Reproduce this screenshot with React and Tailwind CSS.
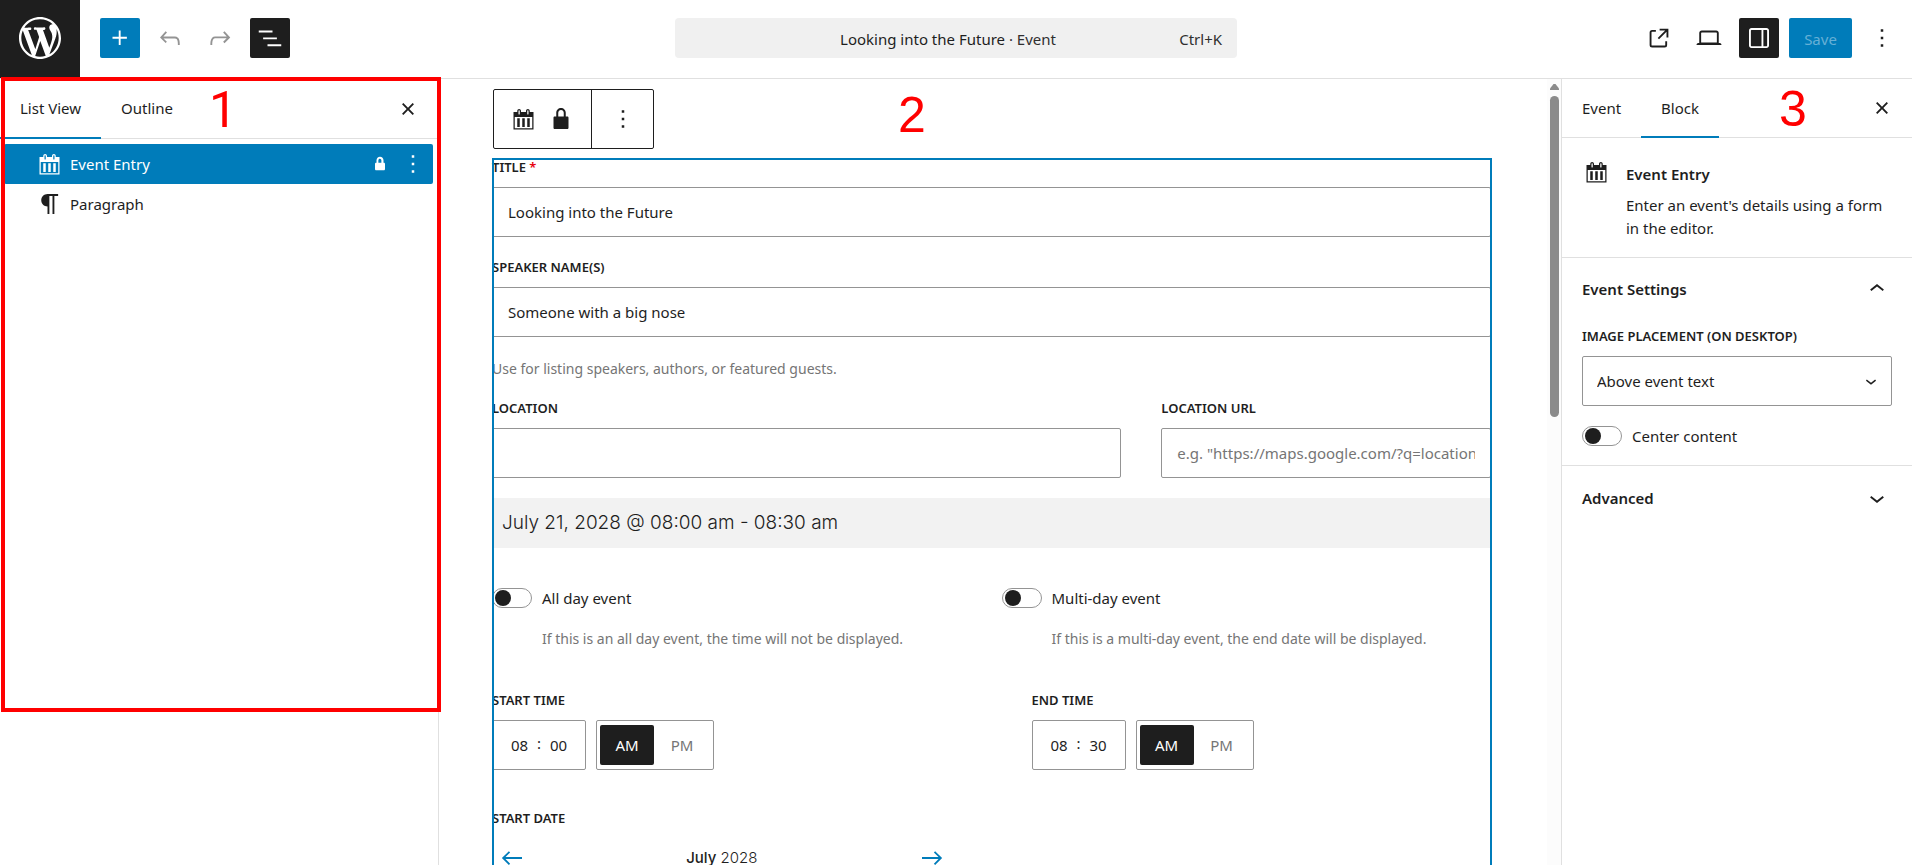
import { useState } from 'react';

const ICONS = {
  plus: 'M11 12.5V17.5H12.5V12.5H17.5V11H12.5V6H11V11H6V12.5H11Z',
  undo: 'M18.3 11.7c-.6-.6-1.4-.9-2.3-.9H6.7l2.9-3.3-1.1-1-4.5 5L8.5 16l1-1-2.7-2.7H16c.5 0 .9.2 1.3.5 1 1 1 3.4 1 4.5v.3h1.5v-.2c0-1.5 0-4.3-1.5-5.7z',
  redo: 'M15.6 6.5l-1.1 1 2.9 3.3H8c-.9 0-1.7.3-2.3.9-1.4 1.5-1.4 4.2-1.4 5.6v.2h1.5v-.3c0-1.1 0-3.5 1-4.5.3-.3.7-.5 1.3-.5h9.2L14.5 15l1.1 1.1 4.6-4.6-4.6-5z',
  listView: 'M3 6h11v1.5H3V6Zm3.5 5.5h11V13h-11v-1.5ZM21 17H10v1.5h11V17Z',
  external: 'M19.5 4.5h-7V6h4.44l-5.97 5.97 1.06 1.06L18 7.06v4.44h1.5v-7Zm-13 1a2 2 0 0 0-2 2v10a2 2 0 0 0 2 2h10a2 2 0 0 0 2-2v-3H17v3a.5.5 0 0 1-.5.5h-10a.5.5 0 0 1-.5-.5v-10a.5.5 0 0 1 .5-.5h3V5.5h-3Z',
  desktop: 'M20.5 16h-.7V8c0-1.1-.9-2-2-2H6.2c-1.1 0-2 .9-2 2v8h-.7c-.8 0-1.5.7-1.5 1.5h20c0-.8-.7-1.5-1.5-1.5zM5.7 8c0-.3.2-.5.5-.5h11.6c.3 0 .5.2.5.5v7.6H5.7V8z',
  drawer: 'M18 4H6c-1.1 0-2 .9-2 2v12c0 1.1.9 2 2 2h12c1.1 0 2-.9 2-2V6c0-1.1-.9-2-2-2zm-4 14.5H6c-.3 0-.5-.2-.5-.5V6c0-.3.2-.5.5-.5h8v13zm4.5-.5c0 .3-.2.5-.5.5h-2.5v-13H18c.3 0 .5.2.5.5v12z',
  more: 'M13 19h-2v-2h2v2zm0-6h-2v-2h2v2zm0-6h-2V5h2v2z',
  close: 'M12 13.06l3.712 3.713 1.061-1.06L13.061 12l3.712-3.712-1.06-1.06L12 10.938 8.288 7.227l-1.061 1.06L10.939 12l-3.712 3.712 1.06 1.061L12 13.061z',
  chevronUp: 'M6.5 12.4L12 8l5.5 4.4-.9 1.2L12 10l-4.5 3.6-1-1.2z',
  chevronDown: 'M17.5 11.6L12 16l-5.5-4.4.9-1.2L12 14l4.5-3.6 1 1.2z',
  arrowLeft: 'M20 11.2H6.8l3.7-3.7-1-1L3.9 12l5.6 5.5 1-1-3.7-3.7H20z',
  arrowRight: 'm14.5 6.5-1 1 3.7 3.7H4v1.6h13.2l-3.7 3.7 1 1 5.6-5.5z',
  lock: 'M17 10h-1.2V7c0-2.1-1.7-3.8-3.8-3.8-2.1 0-3.8 1.7-3.8 3.8v3H7c-.6 0-1 .4-1 1v8c0 .6.4 1 1 1h10c.6 0 1-.4 1-1v-8c0-.6-.4-1-1-1zm-2.8 0H9.8V7c0-1.2 1-2.2 2.2-2.2s2.2 1 2.2 2.2v3z',
  lockSmall: 'M15 11h-.2V9c0-1.5-1.2-2.8-2.8-2.8S9.2 7.5 9.2 9v2H9c-.6 0-1 .4-1 1v4c0 .6.4 1 1 1h6c.6 0 1-.4 1-1v-4c0-.6-.4-1-1-1zm-1.8 0h-2.5V9c0-.7.6-1.2 1.2-1.2s1.2.6 1.2 1.2v2z',
  paragraph: 'm9.996 14v-.225l.004 0v6.225h1.5v-14.5h2.5v14.5h1.5v-14.5h3v-1.5h-8.504c-2.761 0-5 2.239-5 5 0 2.761 2.239 5 5 5z',
};

function Icon({ name, size = 30, className }) {
  return (
    <svg width={size} height={size} viewBox="0 0 24 24" fill="currentColor" className={className} aria-hidden="true">
      <path d={ICONS[name]} />
    </svg>
  );
}

function CalendarIcon() {
  return (
    <svg width="25" height="25" viewBox="0 0 20 20" fill="currentColor" className="shrink-0" aria-hidden="true">
      <path d="M15 4h3v14H2V4h3V3c0-.83.67-1.5 1.5-1.5S8 2.17 8 3v1h4V3c0-.83.67-1.5 1.5-1.5S15 2.17 15 3v1zM6 3v2.5c0 .28.22.5.5.5s.5-.22.5-.5V3c0-.28-.22-.5-.5-.5S6 2.72 6 3zm7 0v2.5c0 .28.22.5.5.5s.5-.22.5-.5V3c0-.28-.22-.5-.5-.5s-.5.22-.5.5zm4 14V8H3v9h14zM7 16V9H5v7h2zm4 0V9H9v7h2zm4 0V9h-2v7h2z" />
    </svg>
  );
}

function WordPressLogo() {
  return (
    <svg width="42" height="42" viewBox="0 0 20 20" fill="currentColor" aria-hidden="true">
      <path d="M20 10c0-5.51-4.49-10-10-10C4.48 0 0 4.49 0 10c0 5.52 4.48 10 10 10 5.51 0 10-4.48 10-10zM7.78 15.37L4.37 6.22c.55-.02 1.17-.08 1.17-.08.5-.06.44-1.13-.06-1.11 0 0-1.45.11-2.37.11-.18 0-.37 0-.58-.01C4.12 2.69 6.87 1.11 10 1.11c2.33 0 4.45.87 6.05 2.34-.68-.11-1.65.39-1.65 1.58 0 .74.45 1.36.9 2.1.35.61.55 1.36.55 2.46 0 1.49-1.4 5-1.4 5l-3.03-8.37c.54-.02.82-.17.82-.17.5-.05.44-1.25-.06-1.22 0 0-1.44.12-2.38.12-.87 0-2.33-.12-2.33-.12-.5-.03-.56 1.2-.06 1.22l.92.08 1.26 3.41zM17.41 10c.24-.64.74-1.87.43-4.25.7 1.29 1.05 2.71 1.05 4.25 0 3.29-1.73 6.24-4.4 7.78.97-2.59 1.94-5.2 2.92-7.78zM6.1 18.09C3.12 16.65 1.11 13.53 1.11 10c0-1.3.23-2.48.72-3.59C3.25 10.3 4.67 14.2 6.1 18.09zm4.03-6.63l2.58 6.98c-.86.29-1.76.45-2.71.45-.79 0-1.57-.11-2.29-.33.81-2.38 1.62-4.74 2.42-7.1z" />
    </svg>
  );
}

function IconButton({ icon, label, className = '' }) {
  return (
    <button type="button" aria-label={label} className={`flex size-10 shrink-0 items-center justify-center rounded-xs ${className}`}>
      <Icon name={icon} />
    </button>
  );
}

function Toggle({ id, label, help }) {
  return (
    <div>
      <div className="flex h-5 items-center gap-2.5">
        <input
          id={id}
          type="checkbox"
          role="switch"
          className="h-5 w-10 shrink-0 appearance-none rounded-full border border-[#949494] bg-white before:mt-px before:ml-0.5 before:block before:size-4 before:rounded-full before:bg-[#1e1e1e] checked:before:ml-5"
        />
        <label htmlFor={id}>{label}</label>
      </div>
      {help && <p className="mt-[21px] ml-[50px] text-sm leading-5 text-[#757575]">{help}</p>}
    </div>
  );
}

function Field({ id, label, required, className = '', ...props }) {
  return (
    <div className={className}>
      <label htmlFor={id} className="block text-[13px] leading-4 font-semibold uppercase">
        {label} {required && <span className="text-red-600">*</span>}
      </label>
      <input
        id={id}
        type="text"
        className="mt-3 block h-[50px] w-full rounded-xs border border-[#949494] px-[15px] placeholder:text-[#757575]"
        {...props}
      />
    </div>
  );
}

function TimeField({ label, hours, minutes }) {
  return (
    <fieldset>
      <legend className="text-[13px] leading-4 font-semibold uppercase">{label}</legend>
      <div className="mt-3 flex h-[50px] gap-2.5">
        <div className="flex w-[94px] items-center justify-center rounded-xs border border-[#949494]">
          <input aria-label={`${label} hours`} defaultValue={hours} className="w-6 text-center" />
          <span className="w-[15px] pb-1 text-center">:</span>
          <input aria-label={`${label} minutes`} defaultValue={minutes} className="w-6 text-center" />
        </div>
        <div className="flex w-[118px] items-center rounded-xs border border-[#949494] px-[3px]">
          <button type="button" className="h-10 w-[54px] rounded-xs bg-[#1e1e1e] text-white">AM</button>
          <button type="button" className="h-10 flex-1 text-[#757575]">PM</button>
        </div>
      </div>
    </fieldset>
  );
}

function Header() {
  return (
    <header className="flex h-[79px] shrink-0 items-start justify-between border-b border-[#e0e0e0]">
      <div className="flex flex-1 items-start">
        <a href="#dashboard" aria-label="View events" className="mr-5 flex h-[78px] w-20 items-center justify-center bg-[#1e1e1e] pb-[2px] text-white">
          <WordPressLogo />
        </a>
        <div className="flex gap-2.5 pt-[18px]">
          <IconButton icon="plus" label="Block inserter" className="bg-[#007cba] text-white" />
          <IconButton icon="undo" label="Undo" className="text-[#949494]" />
          <IconButton icon="redo" label="Redo" className="text-[#949494]" />
          <IconButton icon="listView" label="Document overview" className="bg-[#1e1e1e] text-white" />
        </div>
      </div>
      <button type="button" className="mt-[18px] flex h-10 w-[562px] items-center rounded-sm bg-[#f0f0f0] px-[15px] pt-0.5">
        <span className="w-8" />
        <span className="flex-1 text-center">Looking into the Future <span className="text-[#2f2f2f]">· Event</span></span>
        <span className="w-12 text-right text-[#2f2f2f]">Ctrl+K</span>
      </button>
      <div className="flex flex-1 justify-end gap-2.5">
        <div className="mt-[18px] mr-2.5 flex gap-2.5">
          <IconButton icon="external" label="View event" />
          <IconButton icon="desktop" label="Preview" />
          <IconButton icon="drawer" label="Settings" className="bg-[#1e1e1e] text-white" />
          <button type="button" className="h-10 w-[63px] rounded-xs bg-[#007cba] pt-0.5 text-[#66b0d6]">Save</button>
          <IconButton icon="more" label="Options" />
        </div>
      </div>
    </header>
  );
}

function ListPanel() {
  return (
    <aside className="relative w-[439px] shrink-0 border-r border-[#e0e0e0]">
      <div className="flex h-[60px] items-center border-b border-[#e0e0e0]">
        <button type="button" className="h-[61px] border-b-2 border-[#007cba] px-5 pt-0.5">List View</button>
        <button type="button" className="h-[61px] border-b-2 border-transparent px-5 pt-0.5">Outline</button>
        <IconButton icon="close" label="Close" className="mr-[10px] ml-auto" />
      </div>
      <ul className="pt-[5px] pr-[5px] pl-1">
        <li className="flex h-10 items-center rounded-xs bg-[#007cba] pl-[33px] text-white">
          <a href="#event-entry" className="flex flex-1 items-center gap-2">
            <CalendarIcon />
            Event Entry
          </a>
          <Icon name="lockSmall" className="-mr-0.5" />
          <IconButton icon="more" label="Options for Event Entry" />
        </li>
        <li className="flex h-10 items-center pl-[31px]">
          <a href="#paragraph" className="flex flex-1 items-center gap-[5px]">
            <Icon name="paragraph" />
            Paragraph
          </a>
        </li>
      </ul>
      {/* Callout frame for area 1 */}
      <div className="pointer-events-none absolute -top-[2px] left-px h-[635px] w-[440px] border-4 border-[#ff0000]" />
      <Callout className="top-[3px] left-[209px] font-['Roboto',sans-serif]">1</Callout>
    </aside>
  );
}

function Callout({ className, children }) {
  return (
    <span className={`pointer-events-none absolute text-[50px] leading-[56px] text-[#ff0000] ${className}`}>
      {children}
    </span>
  );
}

function Editor() {
  return (
    <main className="relative flex min-w-0 flex-1">
      <div className="min-w-0 flex-1 overflow-hidden pt-2.5 pr-14 pl-[54px]">
        <div className="flex h-[60px] w-[161px] rounded-xs border border-[#1e1e1e]">
          <div className="flex flex-1 items-center justify-center gap-2 border-r border-[#1e1e1e]">
            <button type="button" aria-label="Event Entry" className="px-0.5"><CalendarIcon /></button>
            <button type="button" aria-label="Unlock"><Icon name="lock" /></button>
          </div>
          <button type="button" aria-label="Options" className="flex w-[61px] items-center justify-center"><Icon name="more" /></button>
        </div>

        {/* Selected block */}
        <form className="relative mt-2.5 -ml-px h-[900px] after:pointer-events-none after:absolute after:-inset-y-px after:-right-px after:left-0 after:border-2 after:border-[#007cba]">
          <Field id="title" label="Title" required defaultValue="Looking into the Future" />
          <Field id="speaker" label="Speaker name(s)" defaultValue="Someone with a big nose" className="mt-[22px]" />
          <p className="mt-[22px] text-sm leading-5 text-[#757575]">Use for listing speakers, authors, or featured guests.</p>
          <div className="mt-[21px] flex gap-10">
            <Field id="location" label="Location" className="w-[63%]" />
            <Field id="location-url" label="Location URL" placeholder={'e.g. "https://maps.google.com/?q=location"'} className="min-w-0 flex-1" />
          </div>
          <p className="mt-5 flex h-[50px] items-center bg-[#f2f2f2] px-2.5 font-['Inter',sans-serif] text-[19px] font-light">
            July 21, 2028 @ 08:00 am - 08:30 am
          </p>
          <div className="mt-10 grid grid-cols-2 gap-5">
            <Toggle id="all-day" label="All day event" help="If this is an all day event, the time will not be displayed." />
            <Toggle id="multi-day" label="Multi-day event" help="If this is a multi-day event, the end date will be displayed." />
          </div>
          <div className="mt-[43px] grid grid-cols-2 gap-20">
            <TimeField label="Start time" hours="08" minutes="00" />
            <TimeField label="End time" hours="08" minutes="30" />
          </div>
          <div className="mt-10 grid grid-cols-2 gap-20">
            <div>
              <p className="text-[13px] leading-4 font-semibold uppercase">Start date</p>
              <div className="mt-3 flex h-10 items-center justify-between">
                <IconButton icon="arrowLeft" label="View previous month" className="text-[#007cba]" />
                <span className="font-['Inter',sans-serif] leading-4 font-light"><strong className="font-medium">July</strong> 2028</span>
                <IconButton icon="arrowRight" label="View next month" className="text-[#007cba]" />
              </div>
            </div>
          </div>
        </form>
      </div>

      {/* Scrollbar */}
      <div className="flex w-[14px] shrink-0 flex-col items-center bg-[#fcfcfc] pt-[5px]">
        <svg width="9" height="6" viewBox="0 0 9 6" fill="#8b8b8b" aria-hidden="true"><path d="M3.500 0h2L9 4.500V6H0V4.500z" /></svg>
        <div className="mt-1.5 h-[321px] w-[9px] rounded-full bg-[#8b8b8b]" />
      </div>
      <Callout className="top-2 left-[459px] font-['Liberation_Sans',sans-serif]">2</Callout>
    </main>
  );
}

function SettingsPanel() {
  const [open, setOpen] = useState(true);

  return (
    <aside className="relative w-[351px] shrink-0 border-l border-[#e0e0e0]">
      <div className="flex h-[59px] items-center border-b border-[#e0e0e0]">
        <button type="button" className="h-[60px] border-b-2 border-transparent px-5 pt-0.5">Event</button>
        <button type="button" className="h-[60px] border-b-2 border-[#007cba] px-5 pt-0.5">Block</button>
        <IconButton icon="close" label="Close settings" className="mr-[10px] ml-auto" />
      </div>

      <div className="flex gap-[17px] border-b border-[#e0e0e0] px-[22px] pt-[22px] pb-[17px]">
        <CalendarIcon />
        <div>
          <h2 className="leading-7 font-semibold">Event Entry</h2>
          <p className="mt-1.5 leading-[23px]">Enter an event's details using a form in the editor.</p>
        </div>
      </div>

      <section className="border-b border-[#e0e0e0] px-5 pb-[19px]">
        <button type="button" onClick={() => setOpen(!open)} className="flex h-[62px] w-full items-center justify-between font-semibold">
          Event Settings
          <Icon name={open ? 'chevronUp' : 'chevronDown'} />
        </button>
        {open && (
          <>
            <label htmlFor="placement" className="mt-2 block text-[13px] leading-4 font-semibold uppercase">Image placement (on desktop)</label>
            <div className="relative mt-3">
              <select id="placement" className="h-[50px] w-full appearance-none rounded-xs border border-[#949494] px-3.5">
                <option>Above event text</option>
              </select>
              <Icon name="chevronDown" size={22} className="pointer-events-none absolute top-3.5 right-2.5" />
            </div>
            <div className="mt-5">
              <Toggle id="center" label="Center content" />
            </div>
          </>
        )}
      </section>

      <button type="button" className="flex h-16 w-full items-center justify-between px-5 font-semibold">
        Advanced
        <Icon name="chevronDown" />
      </button>
      <Callout className="top-[2px] left-[217px] font-['Liberation_Sans',sans-serif]">3</Callout>
    </aside>
  );
}

export default function App() {
  return (
    <div className="flex h-screen flex-col overflow-hidden bg-white font-['Noto_Sans',sans-serif] text-[15px] text-[#1e1e1e]">
      <Header />
      <div className="flex min-h-0 flex-1">
        <ListPanel />
        <Editor />
        <SettingsPanel />
      </div>
    </div>
  );
}
